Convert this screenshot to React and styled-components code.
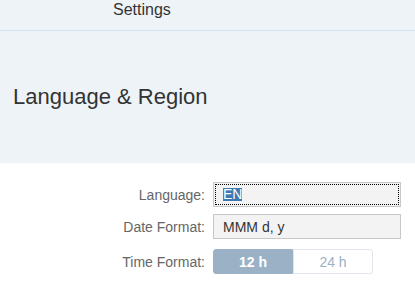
import React, { useState } from "react"
import styled, { createGlobalStyle } from "styled-components"

const GlobalStyle = createGlobalStyle`
  html, body {
    margin: 0;
    padding: 0;
    background: #ffffff;
    font-family: "Liberation Sans", Arial, sans-serif;
  }
`

const Page = styled.div`
  width: 415px;
  height: 303px;
  overflow: hidden;
`

const Banner = styled.div`
  background: #eef3f8;
  height: 163px;
  display: flex;
  flex-direction: column;
`

const Header = styled.div`
  box-sizing: border-box;
  height: 31px;
  border-bottom: 1px solid #d3e1ef;
  padding: 1px 0 0 113px;
  line-height: 18px;
  font-size: 16px;
  color: #333333;
`

const Title = styled.h1`
  margin: 0;
  padding: 53px 0 0 13px;
  font-size: 22px;
  font-weight: normal;
  color: #333333;
`

const Form = styled.div`
  display: grid;
  grid-template-columns: 205px 188px;
  column-gap: 8px;
  row-gap: 7px;
  padding-top: 19px;
  align-items: center;
`

const Label = styled.div`
  text-align: right;
  font-size: 14px;
  color: #666666;
  margin-top: ${(p) => p.$shift || 0}px;
`

const Field = styled.div`
  box-sizing: border-box;
  height: 25px;
  border: 1px solid #c8c8c8;
  background: #f3f3f3;
  display: flex;
  align-items: center;
  padding-left: 9px;
  font-size: 14px;
  color: #333333;
  outline: ${(p) => (p.$focused ? "1px dotted #000" : "none")};
  outline-offset: -3px;
`

const Selection = styled.span`
  background: #3d7ab3;
  color: #ffffff;
  line-height: 13px;
`

const Segmented = styled.div`
  display: flex;
  width: 160px;
  height: 25px;
  margin-top: 3px;
`

const Segment = styled.button`
  flex: 1;
  box-sizing: border-box;
  font-family: inherit;
  font-size: 14px;
  cursor: pointer;
  border: 1px solid ${(p) => (p.$active ? "#9ab1c6" : "#e0e6ec")};
  background: ${(p) => (p.$active ? "#9ab1c6" : "#ffffff")};
  color: ${(p) => (p.$active ? "#ffffff" : "#9ab1c6")};
  font-weight: ${(p) => (p.$active ? "bold" : "normal")};
  border-radius: ${(p) => (p.$first ? "3px 0 0 3px" : "0 3px 3px 0")};
  padding: 0;
`

export default function App() {
  const [format, setFormat] = useState("12")
  return (
    <Page>
      <GlobalStyle />
      <Banner>
        <Header>Settings</Header>
        <Title>Language &amp; Region</Title>
      </Banner>
      <Form>
        <Label>Language:</Label>
        <Field $focused>
          <Selection>EN</Selection>
        </Field>
        <Label>Date Format:</Label>
        <Field>MMM d, y</Field>
        <Label $shift={3}>Time Format:</Label>
        <Segmented>
          <Segment $first $active={format === "12"} onClick={() => setFormat("12")}>
            12 h
          </Segment>
          <Segment $active={format === "24"} onClick={() => setFormat("24")}>
            24 h
          </Segment>
        </Segmented>
      </Form>
    </Page>
  )
}
